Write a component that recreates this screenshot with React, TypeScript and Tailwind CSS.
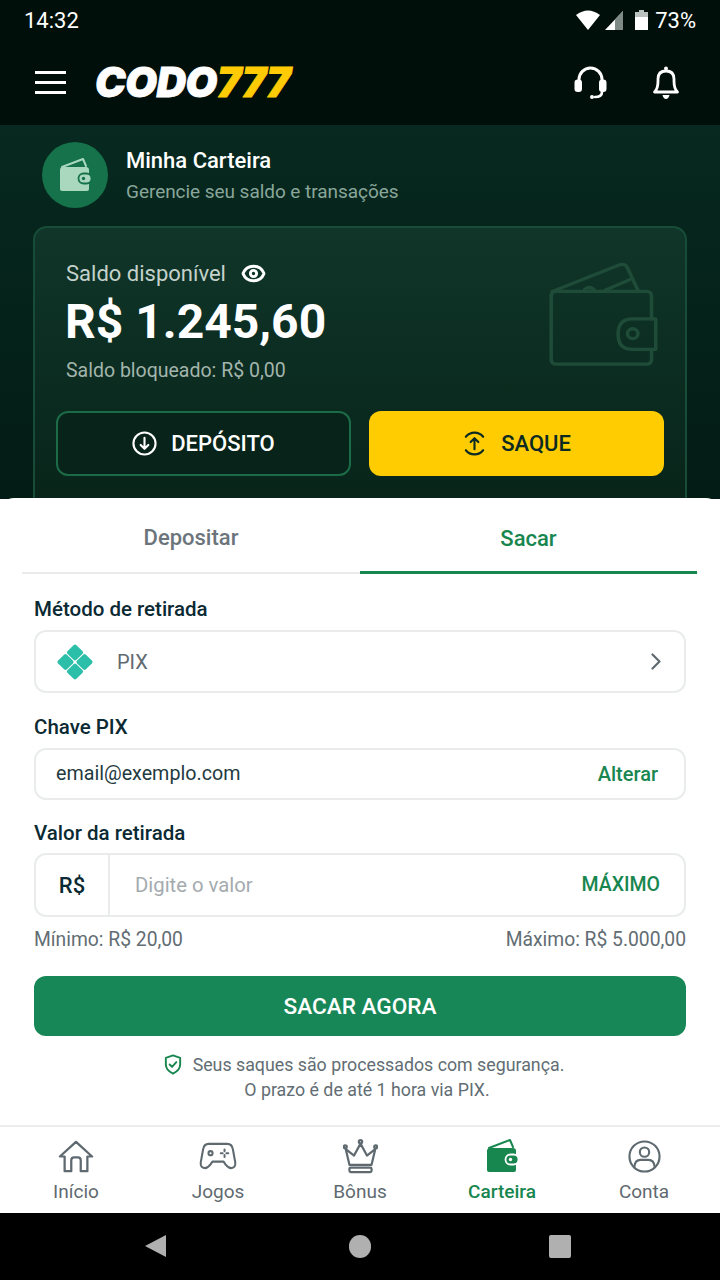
import { Eye } from "lucide-react";

const font = { fontFamily: "Roboto, sans-serif" };

const WalletLine = ({ className }: { className?: string }) => (
  <svg viewBox="0 0 110 106" preserveAspectRatio="none" fill="none" stroke="currentColor" strokeWidth="3.4" strokeLinejoin="round" strokeLinecap="round" className={className}>
    <path d="M5 29 L69 2 Q75 0 77 5 L87 28" />
    <path d="M55 28 L79 17" />
    <path d="M36 27 Q40 23 45 27" />
    <path d="M100 57 V34 Q100 29 95 29 H9 Q4 29 4 34 V98 Q4 103 9 103 H95 Q100 103 100 98 V88" />
    <path d="M82 57 H104 V88 H82 Q68 88 68 72.5 Q68 57 82 57 Z" />
    <circle cx="82" cy="72" r="5" />
  </svg>
);

const WalletSolid = ({ className, hole }: { className?: string; hole: string }) => (
  <svg viewBox="0 0 36 36" className={className}>
    <path d="M5 10 L26 2 L29 9" fill="none" stroke="currentColor" strokeWidth="2" strokeLinejoin="round" strokeLinecap="round" />
    <path d="M3 13 Q3 10 6 10 H29 Q32 10 32 13 V32 Q32 34 30 34 H5 Q3 34 3 32 Z" fill="currentColor" />
    <rect x="21.5" y="16.5" width="13" height="10" rx="5" fill="currentColor" stroke={hole} strokeWidth="1.8" />
    <circle cx="26.5" cy="21.5" r="1.7" fill={hole} />
  </svg>
);

const NavItem = ({ label, active, children }: { label: string; active?: boolean; children: React.ReactNode }) => (
  <div className={`flex flex-col items-center w-[142px] ${active ? "text-[#17864f] font-medium" : "text-[#5f6a70]"}`}>
    <div className="h-[46px] mt-[5px] flex items-center justify-center">{children}</div>
    <span className="text-[19px] leading-[24px] mt-[1px]">{label}</span>
  </div>
);

export default function App() {
  return (
    <div style={font} className="w-[720px] h-[1280px] flex flex-col overflow-hidden bg-white">
      {/* top bar */}
      <div className="h-[125px] shrink-0 bg-[#010f0b] text-white">
        <div className="h-[40px] flex items-center justify-between pl-[24px] pr-[24px] text-[22px]">
          <span>14:32</span>
          <div className="flex items-center">
            <svg viewBox="0 0 24 20" className="w-[24px] h-[20px]" fill="white">
              <path d="M0 5 Q12 -4 24 5 L12 20 Z" />
            </svg>
            <svg viewBox="0 0 18 19" className="ml-[5px] w-[18px] h-[19px]">
              <path d="M0 19 L18 0 V19 Z" fill="white" />
              <path d="M10 19 V8.5 L18 0 V19 Z" fill="#7d8a86" />
            </svg>
            <svg viewBox="0 0 13 20" className="ml-[12px] w-[13px] h-[20px]">
              <path d="M4 0 H9 V2 H13 V7 H0 V2 H4 Z" fill="#b9c2bf" />
              <rect x="0" y="7" width="13" height="13" fill="white" />
            </svg>
            <span className="ml-[7px]">73%</span>
          </div>
        </div>
        <div className="h-[85px] flex items-center pl-[35px] pr-[40px]">
          <div className="w-[31px] flex flex-col gap-[7px]">
            <div className="h-[3px] bg-white" />
            <div className="h-[3px] bg-white" />
            <div className="h-[3px] bg-white" />
          </div>
          <div className="ml-[29px] text-[41px] leading-none font-black italic tracking-[-0.5px] [-webkit-text-stroke:0.8px_currentColor] [font-family:Inter,sans-serif]">
            <span className="text-white">CODO</span>
            <span className="text-[#ffcb05]">777</span>
          </div>
          <svg viewBox="0 0 33 33" fill="none" stroke="white" strokeWidth="3" strokeLinecap="round" className="ml-auto w-[33px] h-[33px]">
            <path d="M5 17 V13.5 A11.5 11.5 0 0 1 28 13.5 V17" />
            <rect x="0.5" y="13.5" width="7.5" height="12.5" rx="3.2" fill="white" stroke="none" />
            <rect x="25" y="13.5" width="7.5" height="12.5" rx="3.2" fill="white" stroke="none" />
            <path d="M28 26 Q28 31 21 31" strokeWidth="2.6" />
            <circle cx="18" cy="31" r="2" fill="white" stroke="none" />
          </svg>
          <svg viewBox="0 0 28 33" fill="none" stroke="white" strokeWidth="2.8" strokeLinejoin="round" className="ml-[45px] w-[28px] h-[33px]">
            <path d="M2.5 26 Q6 23 6 15 V13 Q6 5 14 5 Q22 5 22 13 V15 Q22 23 25.5 26 Z" />
            <circle cx="14" cy="2.5" r="2" fill="white" stroke="none" />
            <path d="M10.5 29 H17.5 Q16.5 33 14 33 Q11.5 33 10.5 29 Z" fill="white" stroke="none" />
          </svg>
        </div>
      </div>

      {/* green area */}
      <div className="h-[374px] shrink-0 overflow-hidden bg-gradient-to-b from-[#07291f] to-[#031c15] px-[33px]">
        <div className="flex items-center h-[101px] pl-[9px] pb-[1px]">
          <div className="w-[66px] h-[66px] rounded-full bg-[#15724a] flex items-center justify-center">
            <WalletSolid className="w-[36px] h-[36px] text-[#a9d8bf]" hole="#15724a" />
          </div>
          <div className="ml-[18px]">
            <div className="text-[22px] leading-[28px] font-medium text-white">Minha Carteira</div>
            <div className="text-[19px] leading-[24px] mt-[5px] text-[#8aa69a] tracking-[-0.05px]">Gerencie seu saldo e transações</div>
          </div>
        </div>
        <div className="h-[300px] rounded-t-[14px] border-2 border-[#174d38] bg-gradient-to-b from-[#103629] to-[#082319] px-[21px] pt-[30px] relative">
          <div className="pl-[10px]">
            <div className="flex items-center h-[30px] text-[22px] text-[#c4d2cb]">
              Saldo disponível
              <Eye className="ml-[15px] w-[25px] h-[25px] text-white" strokeWidth={2.8} />
            </div>
            <div className="text-[48px] leading-[56px] font-bold text-white mt-[6px] -ml-[1px]">R$ 1.245,60</div>
            <div className="text-[19.5px] leading-[24px] text-[#a3b5ac] mt-[9px]">Saldo bloqueado: R$ 0,00</div>
          </div>
          <WalletLine className="absolute right-[23px] top-[35px] w-[115px] h-[104px] text-[#1f4c39]" />
          <div className="flex gap-[18px] mt-[28px]">
            <div className="w-[295px] h-[65px] rounded-[12px] border-2 border-[#1b6b48] bg-[#082319] text-white flex items-center justify-center gap-[14px] text-[22px] font-medium">
              <svg viewBox="0 0 26 26" fill="none" stroke="currentColor" strokeWidth="2.2" strokeLinecap="round" strokeLinejoin="round" className="w-[25px] h-[25px]">
                <circle cx="13" cy="13" r="11.5" />
                <path d="M13 7 V18 M9 14.5 L13 18.5 L17 14.5" />
              </svg>
              DEPÓSITO
            </div>
            <div className="w-[295px] h-[65px] rounded-[12px] bg-[#ffcc02] text-[#0b2a22] flex items-center justify-center gap-[14px] text-[22px] font-medium">
              <svg viewBox="0 0 26 26" fill="none" stroke="currentColor" strokeWidth="2.2" strokeLinecap="round" strokeLinejoin="round" className="w-[25px] h-[25px]">
                <path d="M4 6 A11.5 11.5 0 0 1 22 6 M4 20 A11.5 11.5 0 0 0 22 20" />
                <path d="M13 19 V8 M9 11.5 L13 7.5 L17 11.5" />
              </svg>
              SAQUE
            </div>
          </div>
        </div>
      </div>

      {/* sheet */}
      <div className="-mt-[1px] z-10 h-[628px] shrink-0 bg-white rounded-t-[14px]">
        <div className="mx-[22px] flex h-[76px] border-b-2 border-[#eaecec]">
          <div className="w-[338px] flex items-center justify-center pt-[5px] text-[22px] font-medium text-[#6c757b]">Depositar</div>
          <div className="w-[337px] -mb-[2px] flex items-center justify-center pt-[7px] text-[22px] font-medium text-[#17864f] border-b-[3px] border-[#17864f]">Sacar</div>
        </div>
        <div className="px-[34px]">
          <div className="text-[20.5px] leading-[26px] font-medium text-[#0b2a33] mt-[22px]">Método de retirada</div>
          <div className="h-[63px] mt-[8px] rounded-[12px] border-2 border-[#eaecec] flex items-center pl-[21px] pr-[23px]">
            <svg viewBox="0 0 36 36" className="w-[36px] h-[36px]" fill="#2bbfa9">
              <rect x="11.8" y="2.3" width="12.4" height="12.4" rx="2" transform="rotate(45 18 8.5)" />
              <rect x="11.8" y="21.3" width="12.4" height="12.4" rx="2" transform="rotate(45 18 27.5)" />
              <rect x="2.3" y="11.8" width="12.4" height="12.4" rx="2" transform="rotate(45 8.5 18)" />
              <rect x="21.3" y="11.8" width="12.4" height="12.4" rx="2" transform="rotate(45 27.5 18)" />
            </svg>
            <span className="ml-[24px] text-[20px] text-[#5f6a70]">PIX</span>
            <svg viewBox="0 0 10 17" fill="none" stroke="#5f6a70" strokeWidth="2.2" strokeLinecap="round" strokeLinejoin="round" className="ml-auto w-[10px] h-[17px]">
              <path d="M1.5 1.5 L8.5 8.5 L1.5 15.5" />
            </svg>
          </div>
          <div className="text-[20.5px] leading-[26px] font-medium text-[#0b2a33] mt-[21px]">Chave PIX</div>
          <div className="h-[52px] mt-[8px] rounded-[12px] border-2 border-[#eaecec] flex items-center justify-between pl-[20px] pr-[26px]">
            <span className="text-[19.7px] text-[#1f3a40]">email@exemplo.com</span>
            <span className="text-[20px] font-medium text-[#17864f]">Alterar</span>
          </div>
          <div className="text-[20.5px] leading-[26px] font-medium text-[#0b2a33] mt-[20px]">Valor da retirada</div>
          <div className="h-[64px] mt-[7px] rounded-[12px] border-2 border-[#eaecec] flex items-center">
            <div className="w-[74px] h-full flex items-center justify-center border-r-2 border-[#eaecec] text-[22px] font-medium text-[#0b2a33]">R$</div>
            <span className="ml-[25px] text-[20.3px] text-[#a4abaf]">Digite o valor</span>
            <span className="ml-auto mr-[24px] text-[19.5px] font-medium text-[#17864f]">MÁXIMO</span>
          </div>
          <div className="flex justify-between mt-[11px] text-[19.3px] leading-[24px] text-[#626d73]">
            <span>Mínimo: R$ 20,00</span>
            <span>Máximo: R$ 5.000,00</span>
          </div>
          <div className="h-[60px] mt-[24px] rounded-[12px] bg-[#188757] flex items-center justify-center pt-[1px] text-[22.6px] font-medium text-white">SACAR AGORA</div>
          <div className="mt-[16px] flex flex-col items-center text-[17.8px] leading-[25px] text-[#626d73]">
            <div className="flex items-center gap-[11px] pl-[8px]">
              <svg viewBox="0 0 18 22" fill="none" stroke="#17864f" strokeWidth="2" strokeLinecap="round" strokeLinejoin="round" className="w-[18px] h-[21px]">
                <path d="M9 1.5 L16.5 4 V11 Q16.5 17 9 20.5 Q1.5 17 1.5 11 V4 Z" />
                <path d="M5.5 11 L8 13.5 L12.5 8.5" />
              </svg>
              Seus saques são processados com segurança.
            </div>
            <div className="pl-[14px]">O prazo é de até 1 hora via PIX.</div>
          </div>
        </div>
      </div>

      {/* bottom nav */}
      <div className="h-[88px] shrink-0 bg-white border-t-2 border-[#ececec] flex items-start justify-center pt-[1px] -mt-[1px] z-10">
        <NavItem label="Início">
          <svg viewBox="0 0 38 36" fill="none" stroke="currentColor" strokeWidth="2.4" strokeLinejoin="round" strokeLinecap="round" preserveAspectRatio="none" className="w-[36px] h-[33px]">
            <path d="M2 18 L19 2 L36 18 H31 V34 H24 V22 Q24 19 21 19 H17 Q14 19 14 22 V34 H7 V18 Z" />
          </svg>
        </NavItem>
        <NavItem label="Jogos">
          <svg viewBox="0 0 40 30" fill="none" stroke="currentColor" strokeWidth="2.2" strokeLinejoin="round" strokeLinecap="round" className="w-[38px] h-[28px]">
            <path d="M10 2 H30 Q35 2 36 8 L38.5 22 Q39 28 34 28 Q31 28 28 24 L26 21 H14 L12 24 Q9 28 6 28 Q1 28 1.5 22 L4 8 Q5 2 10 2 Z" />
            <circle cx="12" cy="12" r="2.2" />
            <path d="M27 8 V10 M27 14 V16 M23 12 H25 M29 12 H31" />
          </svg>
        </NavItem>
        <NavItem label="Bônus">
          <svg viewBox="0 0 38 38" fill="none" stroke="currentColor" strokeWidth="2.4" strokeLinejoin="round" strokeLinecap="round" className="w-[35px] h-[35px]">
            <path d="M7 28 L3 11 L12 18 L19 5 L26 18 L35 11 L31 28 Z" />
            <rect x="7" y="31" width="24" height="5" rx="1.5" />
            <circle cx="19" cy="3" r="1.8" />
            <circle cx="2.5" cy="8.5" r="1.6" />
            <circle cx="35.5" cy="8.5" r="1.6" />
          </svg>
        </NavItem>
        <NavItem label="Carteira" active>
          <WalletSolid className="w-[36px] h-[36px]" hole="#ffffff" />
        </NavItem>
        <NavItem label="Conta">
          <svg viewBox="0 0 34 34" fill="none" stroke="currentColor" strokeWidth="2.2" strokeLinejoin="round" strokeLinecap="round" className="w-[33px] h-[33px]">
            <circle cx="17" cy="17" r="15.5" />
            <circle cx="17" cy="12.5" r="4.8" />
            <path d="M6.5 28 Q7 20.5 13 20.5 H21 Q27 20.5 27.5 28" />
          </svg>
        </NavItem>
      </div>

      {/* system nav */}
      <div className="flex-1 bg-black relative">
        <div className="absolute left-[145px] top-[22px] w-0 h-0 border-y-[11.5px] border-y-transparent border-r-[21px] border-r-[#b0b0b0]" />
        <div className="absolute left-[349px] top-[22px] w-[22px] h-[23px] rounded-full bg-[#b0b0b0]" />
        <div className="absolute left-[549px] top-[22px] w-[22px] h-[23px] rounded-[2px] bg-[#b0b0b0]" />
      </div>
    </div>
  );
}
